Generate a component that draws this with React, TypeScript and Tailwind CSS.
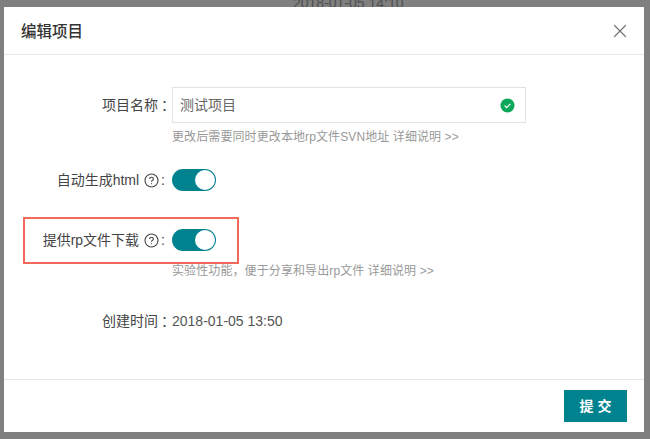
import React from 'react';
import { X } from 'lucide-react';

const FONT = "font-['Helvetica_Neue','Liberation_Sans','Noto_Sans_CJK_SC',sans-serif]";

const Toggle: React.FC = () => (
  <div className="w-[44px] h-[22px] rounded-full bg-[#00838f] flex items-center justify-end pr-[1px]">
    <div className="w-[20px] h-[20px] rounded-full bg-white" />
  </div>
);

const HelpIcon: React.FC = () => (
  <svg width="15" height="15" viewBox="0 0 15 15" fill="none" stroke="#444" strokeWidth="1.1" className="ml-[5px] mr-[2px]">
    <circle cx="7.5" cy="7.5" r="6.5" />
    <path d="M5.6 6c0-1.1.8-1.8 1.9-1.8s1.9.7 1.9 1.7c0 1.4-1.9 1.4-1.9 2.9" />
    <path d="M7.5 10.2v1" />
  </svg>
);

const Label: React.FC<{ children: React.ReactNode; help?: boolean }> = ({ children, help }) => (
  <div className={`w-[168px] shrink-0 flex items-center justify-end text-[14px] text-[#444] ${help ? 'pr-[7px]' : ''}`}>
    {children}
    {help ? <HelpIcon /> : null}
    {help ? <span>:</span> : <span className="ml-[3px] w-[11px] whitespace-nowrap">：</span>}
  </div>
);

const App: React.FC = () => {
  return (
    <div className={`relative w-[650px] h-[439px] overflow-hidden bg-[#7f7f7f] pt-[7px] pl-[4px] ${FONT}`}>
      {/* page text behind the overlay */}
      <div className="absolute left-[293px] top-[-5px] text-[14px] leading-[16px] text-[#4f4f4f]">2018-01-05 14:10</div>

      <div className="relative w-[640px] h-[425px] bg-white flex flex-col">
        <header className="h-[48px] shrink-0 border-b border-[#e8e8e8] flex items-center justify-between pl-[17px] pr-[13px]">
          <h1 className="text-[15.5px] font-medium text-[#333] translate-y-[1px]">编辑项目</h1>
          <X size={22} strokeWidth={1.4} className="text-[#777]" />
        </header>

        <main className="flex-1 flex flex-col pt-[32px]">
          <div className="flex items-center">
            <Label>项目名称</Label>
            <div className="w-[354px] h-[36px] border border-[#e2e2e2] flex items-center justify-between pl-[7px] pr-[10px] text-[14px] text-[#666]">
              <span>测试项目</span>
              <svg width="15" height="15" viewBox="0 0 15 15">
                <circle cx="7.5" cy="7.5" r="7" fill="#0aa858" />
                <path d="M4.6 7.6l2 2 3.8-3.8" fill="none" stroke="#fff" strokeWidth="1.2" />
              </svg>
            </div>
          </div>
          <p className="ml-[168px] mt-[6px] text-[12px] leading-[16px] tracking-[0.1px] text-[#999]">更改后需要同时更改本地rp文件SVN地址 详细说明 &gt;&gt;</p>

          <div className="flex items-center mt-[24px]">
            <Label help>自动生成html</Label>
            <Toggle />
          </div>

          <div className="flex items-center mt-[38px]">
            <Label help>提供rp文件下载</Label>
            <Toggle />
          </div>
          <p className="ml-[168px] mt-[12px] text-[12px] leading-[16px] tracking-[0.1px] text-[#999]">实验性功能，便于分享和导出rp文件 详细说明 &gt;&gt;</p>

          <div className="flex items-center mt-[32px] text-[14px] leading-[20px]">
            <Label>创建时间</Label>
            <span className="text-[#555]">2018-01-05 13:50</span>
          </div>
        </main>

        <footer className="h-[53px] shrink-0 border-t border-[#e8e8e8] flex items-center justify-end pr-[17px]">
          <button className="w-[63px] h-[32px] bg-[#00838f] text-white text-[14px] font-bold">提 交</button>
        </footer>

        {/* red annotation box */}
        <div className="absolute left-[19px] top-[210px] w-[216px] h-[47px] border-2 border-[#f2695c]" />
      </div>
    </div>
  );
};

export default App;
